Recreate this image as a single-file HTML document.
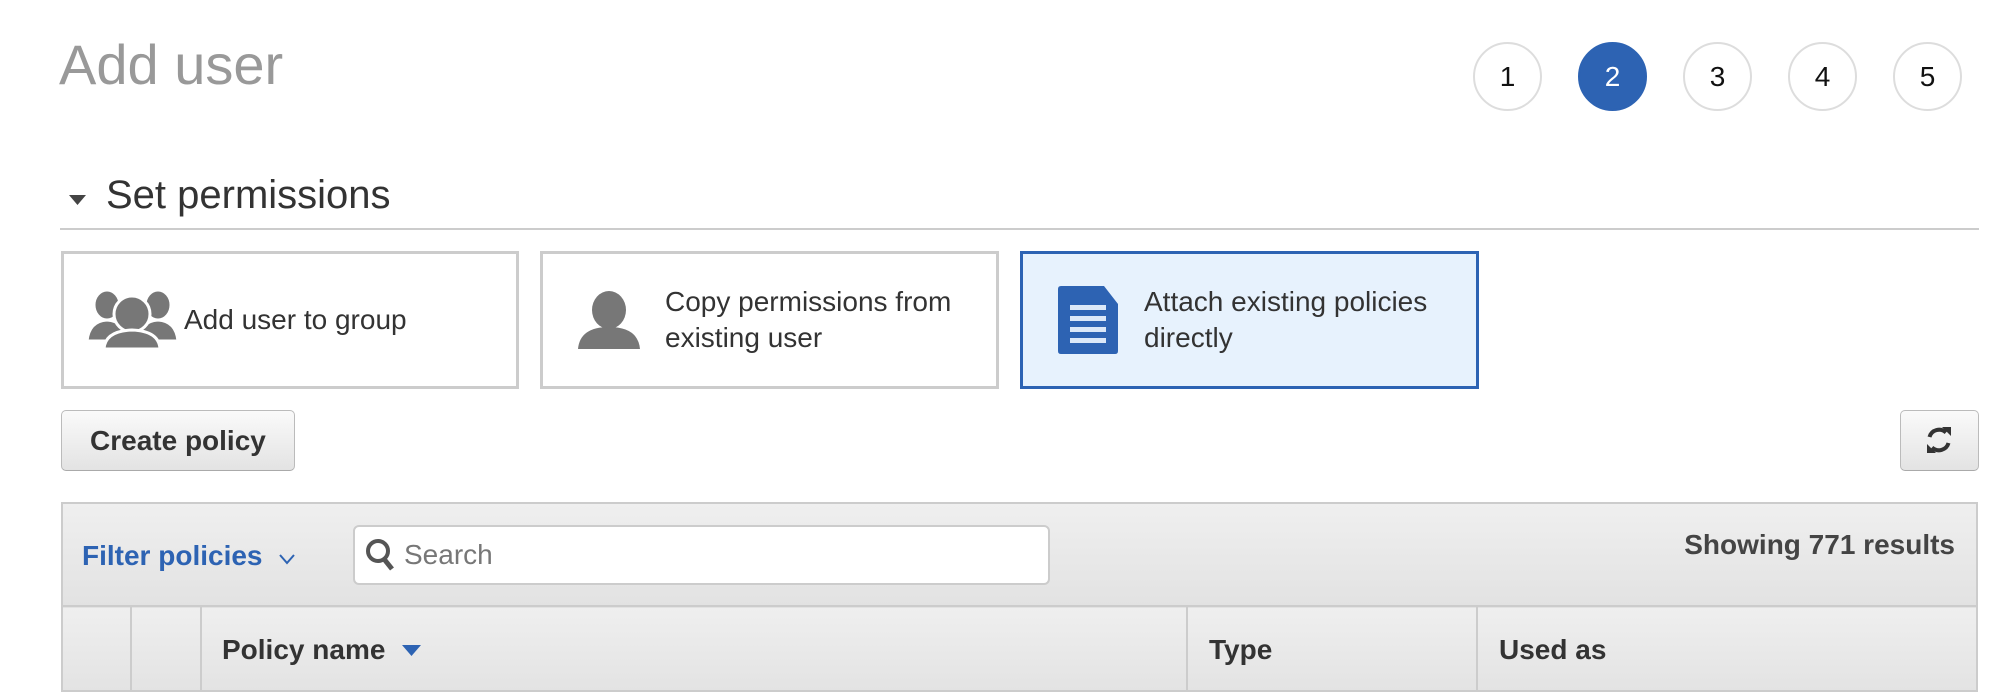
<!DOCTYPE html>
<html><head><meta charset="utf-8"><style>
*{margin:0;padding:0;box-sizing:border-box}
body{width:2010px;height:694px;background:#fff;font-family:"Liberation Sans",Arial,sans-serif;position:relative;overflow:hidden}
.a{position:absolute}
h1{position:absolute;left:59px;top:33px;font-size:56px;font-weight:normal;color:#999;line-height:64px}
.step{position:absolute;top:42px;width:69px;height:69px;border-radius:50%;border:2px solid #ddd;font-size:28px;color:#111;text-align:center;line-height:65px;background:#fff}
.step.on{background:#2d63b3;border-color:#2d63b3;color:#fff}
.card{position:absolute;top:251px;height:138px;border:3px solid #ccc;background:#fff}
.card.on{border-color:#2d63b3;background:#e7f2fd}
.ct{position:absolute;font-size:28px;color:#333;line-height:36px}
.btn{position:absolute;top:410px;height:61px;border:1px solid #bbb;border-bottom-color:#aaa;border-radius:5px;background:linear-gradient(#fafafa,#e3e3e3)}
</style></head><body>
<h1>Add user</h1>
<div class="step" style="left:1473px">1</div>
<div class="step on" style="left:1578px">2</div>
<div class="step" style="left:1683px">3</div>
<div class="step" style="left:1788px">4</div>
<div class="step" style="left:1893px">5</div>

<svg class="a" style="left:68px;top:194px" width="20" height="12"><path d="M1 1H18L9.5 11Z" fill="#444"/></svg>
<div class="a" style="left:106px;top:172px;font-size:40px;color:#333;line-height:46px">Set permissions</div>
<div class="a" style="left:60px;top:228px;width:1919px;height:2px;background:#ccc"></div>

<div class="card" style="left:61px;width:458px"></div>
<svg class="a" style="left:86px;top:289px" width="94" height="60" viewBox="0 0 94 60">
<g fill="#777" stroke="#fff" stroke-width="3">
<ellipse cx="21" cy="16" rx="13" ry="15"/><path d="M1 52Q3 32 21 31Q39 32 41 52Z"/>
<ellipse cx="72" cy="16" rx="13" ry="15"/><path d="M52 52Q54 32 72 31Q90 32 92 52Z"/>
<circle cx="46" cy="25" r="18"/><path d="M18 60Q19 42 46 41Q73 42 74 60Z"/>
</g></svg>
<div class="ct" style="left:184px;top:302px">Add user to group</div>

<div class="card" style="left:540px;width:459px"></div>
<svg class="a" style="left:578px;top:291px" width="62" height="58" viewBox="0 0 62 58">
<g fill="#777"><ellipse cx="31" cy="19" rx="17" ry="19"/><path d="M0 58Q2 36 31 36Q60 36 62 58Z"/></g></svg>
<div class="ct" style="left:665px;top:284px">Copy permissions from<br>existing user</div>

<div class="card on" style="left:1020px;width:459px"></div>
<svg class="a" style="left:1058px;top:286px" width="60" height="68" viewBox="0 0 60 68">
<path d="M3 0H46L60 18V65Q60 68 57 68H3Q0 68 0 65V3Q0 0 3 0Z" fill="#2d63b3"/>
<g fill="#dbe8f8"><rect x="12" y="19" width="36" height="5"/><rect x="12" y="30" width="36" height="5"/><rect x="12" y="41" width="36" height="5"/><rect x="12" y="52" width="36" height="5"/></g></svg>
<div class="ct" style="left:1144px;top:284px">Attach existing policies<br>directly</div>

<div class="btn" style="left:61px;width:234px"></div>
<div class="a" style="left:90px;top:424px;font-size:28px;font-weight:bold;color:#333;line-height:34px">Create policy</div>
<div class="btn" style="left:1900px;width:79px"></div>
<svg class="a" style="left:1925px;top:426px" width="28" height="28" viewBox="0 0 28 28">
<g fill="none" stroke="#333" stroke-width="4"><path d="M4.5 11A10 10 0 0 1 21 6.5"/><path d="M23.5 17A10 10 0 0 1 7 21.5"/></g>
<path d="M17 1H26V10Z" fill="#333"/><path d="M11 27H2V18Z" fill="#333"/></svg>

<div class="a" style="left:61px;top:502px;width:1917px;height:190px;border:2px solid #ccc;background:linear-gradient(#efefef,#e2e2e2 104px,#efefef 104px,#e3e3e3)"></div>
<div class="a" style="left:61px;top:605px;width:1917px;height:2px;background:#ccc"></div>
<div class="a" style="left:82px;top:539px;font-size:28px;font-weight:bold;color:#2d63b3;line-height:34px">Filter policies</div>
<svg class="a" style="left:278px;top:553px" width="18" height="12"><path d="M2 2L9 10L16 2" fill="none" stroke="#2d63b3" stroke-width="2"/></svg>
<div class="a" style="left:353px;top:525px;width:697px;height:60px;background:#fff;border:2px solid #ccc;border-radius:6px"></div>
<svg class="a" style="left:365px;top:538px" width="30" height="34" viewBox="0 0 30 34"><circle cx="13" cy="13" r="10" fill="none" stroke="#555" stroke-width="4"/><path d="M19 21L27 31" stroke="#555" stroke-width="5"/></svg>
<div class="a" style="left:404px;top:538px;font-size:28px;color:#777;line-height:34px">Search</div>
<div class="a" style="right:55px;top:528px;font-size:28px;font-weight:bold;color:#444;line-height:34px">Showing 771 results</div>

<div class="a" style="left:130px;top:607px;width:2px;height:84px;background:#ccc"></div>
<div class="a" style="left:200px;top:607px;width:2px;height:84px;background:#ccc"></div>
<div class="a" style="left:1186px;top:607px;width:2px;height:84px;background:#ccc"></div>
<div class="a" style="left:1476px;top:607px;width:2px;height:84px;background:#ccc"></div>
<div class="a" style="left:222px;top:633px;font-size:28px;font-weight:bold;color:#333;line-height:34px">Policy name</div>
<svg class="a" style="left:402px;top:645px" width="19" height="12"><path d="M0 0H19L9.5 11Z" fill="#2d63b3"/></svg>
<div class="a" style="left:1209px;top:633px;font-size:28px;font-weight:bold;color:#333;line-height:34px">Type</div>
<div class="a" style="left:1499px;top:633px;font-size:28px;font-weight:bold;color:#333;line-height:34px">Used as</div>
</body></html>
